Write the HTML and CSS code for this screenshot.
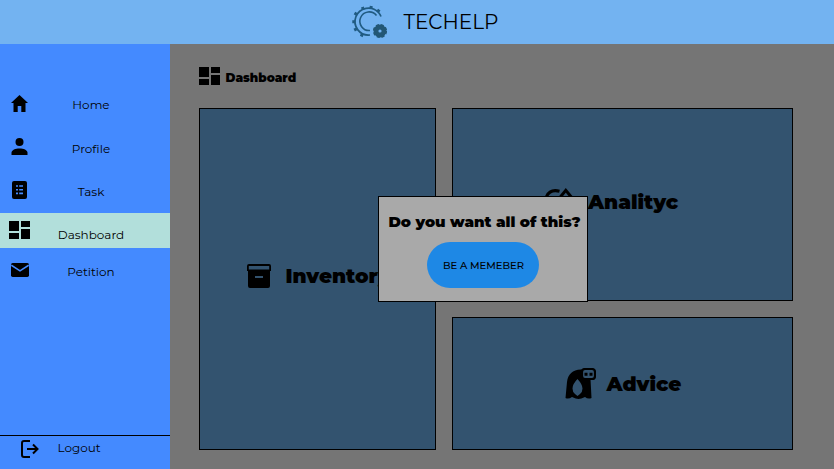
FILE: index.html
```html
<!DOCTYPE html>
<html lang="en">
<head>
<meta charset="utf-8">
<title>Techelp</title>
<link rel="stylesheet" href="styles.css">
</head>
<body>
<svg class="defs" width="0" height="0"><symbol id="grid" viewBox="0 0 21 18"><path d="M0 0h10v10H0zM0 12h10v6H0zM12 0h9v6h-9zM12 8h9v10h-9z"/></symbol></svg>
<header class="header">
  <svg class="logo" viewBox="0 0 36 34" fill="none" stroke="#205b82">
    <path d="M30 11.5A13.500 13.500 0 0 0 27.500 7.500A13.500 13.500 0 1 0 19 30" stroke-width="1.700"/>
    <path d="M25.500 10.500A9.300 9.300 0 1 0 19 25.500" stroke-width="1.600"/>
    <path d="M12.300 4.600l-.9-2.600M19.800 3.800l.5-2.800M26.500 7l1.800-2.400M5.800 9.400L3.500 7.900M4.300 16.800H1.300M5.800 23.700l-2.600 1.400M11.500 28.700l-1.300 2.800" stroke-width="3"/>
    <circle cx="29" cy="26" r="4" stroke-width="4.800" stroke="#235775"/>
    <circle cx="29" cy="26" r="6" stroke-width="2.200" stroke-dasharray="3 1.710" stroke="#235775"/>
  </svg>
  <span class="brand">TECHELP</span>
</header>
<div class="body">
  <nav class="sidebar">
    <a class="item home"><svg width="17" height="17" viewBox="0 0 17 17"><path d="M8.5 0L0 8h2.5v9h4.2v-6h3.6v6h4.2V8H17z"/></svg><span>Home</span></a>
    <a class="item profile"><svg width="17" height="17" viewBox="0 0 17 17"><circle cx="8.5" cy="4" r="4"/><path d="M.5 17v-2.2C.5 9 16.5 9 16.5 14.8V17z"/></svg><span>Profile</span></a>
    <a class="item task"><svg width="15" height="18" viewBox="0 0 15 18"><rect width="15" height="18" rx="2"/><path d="M4 5h2M7.2 5H11M4 8.7h2M7.2 8.7H11M4 12.4h2M7.2 12.4H11" stroke="#448aff" stroke-width="1.6"/></svg><span>Task</span></a>
    <a class="item dashboard"><svg width="21" height="18"><use href="#grid"/></svg><span>Dashboard</span></a>
    <a class="item petition"><svg width="18" height="14" viewBox="0 0 18 14"><rect width="18" height="14" rx="1.7"/><path d="M.3 2.2L9 7.8l8.7-5.6" fill="none" stroke="#448aff" stroke-width="1.6"/></svg><span>Petition</span></a>
    <a class="logout"><svg width="18" height="18" viewBox="0 0 18 18" fill="none" stroke="#000" stroke-width="2"><path d="M9 1H3Q1 1 1 3v12q0 2 2 2h6"/><path d="M6 9h10.500M12 4.500L16.500 9 12 13.500"/></svg><span>Logout</span></a>
  </nav>
  <main class="main">
    <h1 class="title"><svg width="21" height="18"><use href="#grid"/></svg><span>Dashboard</span></h1>
    <div class="cards">
      <section class="card inventory"><svg width="24" height="24" viewBox="0 0 24 24"><path fill-rule="evenodd" d="M2 0h20q2 0 2 2v5h-1v15q0 2-2 2H3q-2 0-2-2V7H0V2q0-2 2-2zM1.8 2v3.6h20.4V2zM8 12v2h8v-2z"/></svg><span>Inventory</span></section>
      <section class="card analytic"><svg width="36" height="28" viewBox="0 0 36 28" fill="none" stroke="#000" stroke-width="3"><path d="M14.500 3.200Q5 .8 1.500 8.500q-2 12 10 15M14.500 10l6.300-7.600L27.100 10"/></svg><span>Analityc</span></section>
      <section class="card advice"><svg width="31" height="31" viewBox="0 0 31 31"><path fill-rule="evenodd" d="M17 1.5C8 1 3 6 2 14L.5 30q3 1.5 6.500-1 4 2 6.500 2t6.500-2q3 2.500 6.500 1L25.500 11H17zM12.500 11q-5 5-5 9.500 0 3.500 2.500 5.500l2.500 2 2.500-2q2.500-2 2.500-5.500 0-4-5-9.500z"/><rect x="17" y="1" width="13" height="10" rx="3" fill="#33536f" stroke="#000" stroke-width="2.2"/><path d="M19.5 4.800h3v3h-3zM24.500 4.800h3v3h-3z"/></svg><span>Advice</span></section>
    </div>
  </main>
</div>
<div class="modal" role="dialog">
  <h2><span>Do you want all of this?</span></h2>
  <button>BE A MEMEBER</button>
</div>
</body>
</html>
```
FILE: styles.css
```css
* { box-sizing: border-box; }
body { margin: 0; width: 834px; height: 469px; overflow: hidden; position: relative; background: #757575; color: #000; font-family: Montserrat, Inter, sans-serif; }
.defs { position: absolute; }
svg { flex: none; }
.header { height: 44px; background: #73b3f1; display: flex; align-items: center; padding-left: 351px; }
.logo { width: 36px; height: 34px; margin-right: 16.5px; }
.brand { font-size: 20px; line-height: 24px; white-space: nowrap; }
.body { display: flex; height: 425px; }
.sidebar { width: 170px; background: #448aff; display: flex; flex-direction: column; padding-top: 42px; font-size: 12px; }
.item { height: 35px; flex: none; display: grid; grid-template-columns: 39px 104px; align-items: center; justify-items: center; }
.item span { position: relative; top: .5px; }
.profile { margin-top: 8px; }
.profile span { top: 1.5px; }
.task { margin-top: 8px; }
.task span { top: 2px; }
.dashboard { margin-top: 6px; padding-bottom: 2px; background: #b2dfdb; }
.dashboard span { top: 5px; }
.petition { margin-top: 4px; }
.petition span { top: 1.5px; }
.logout { margin-top: auto; height: 34px; border-top: 1px solid #000; display: flex; padding: 4px 0 0 21px; }
.logout span { margin-left: 18.5px; line-height: 15px; }
.main { flex: 1; padding: 23px 41px 19px 29px; }
.title { margin: 0 0 23px; height: 18px; display: flex; font-size: 12px; font-weight: 900; gap: 5.5px; }
.title span { line-height: 21px; white-space: nowrap; }
.cards { display: grid; grid-template: 193px 133px / 237px 341px; gap: 16px; }
.card { border: 1px solid #000; background: #33536f; display: flex; align-items: center; font-size: 20px; font-weight: 900; white-space: nowrap; }
.inventory { grid-row: span 2; padding-left: 47px; gap: 14.5px; padding-bottom: 6px; }
.analytic { padding-left: 92px; gap: 7px; padding-bottom: 6px; }
.advice { padding-left: 112px; gap: 10.5px; }
.modal { position: absolute; left: 378px; top: 196px; width: 210px; height: 106px; border: 1px solid #000; background: #a9a9a9; display: flex; flex-direction: column; align-items: center; padding-top: 15px; }
.modal h2 { margin: 0 0 10px; padding-left: 3px; font-size: 15px; line-height: 20px; font-weight: 900; white-space: nowrap; }
.modal button { width: 112px; height: 46px; border: 0; border-radius: 23px; padding: 0 0 0 1px; background: #1e88e5; color: #000; font: 500 10px Montserrat, Inter, sans-serif; }
```
